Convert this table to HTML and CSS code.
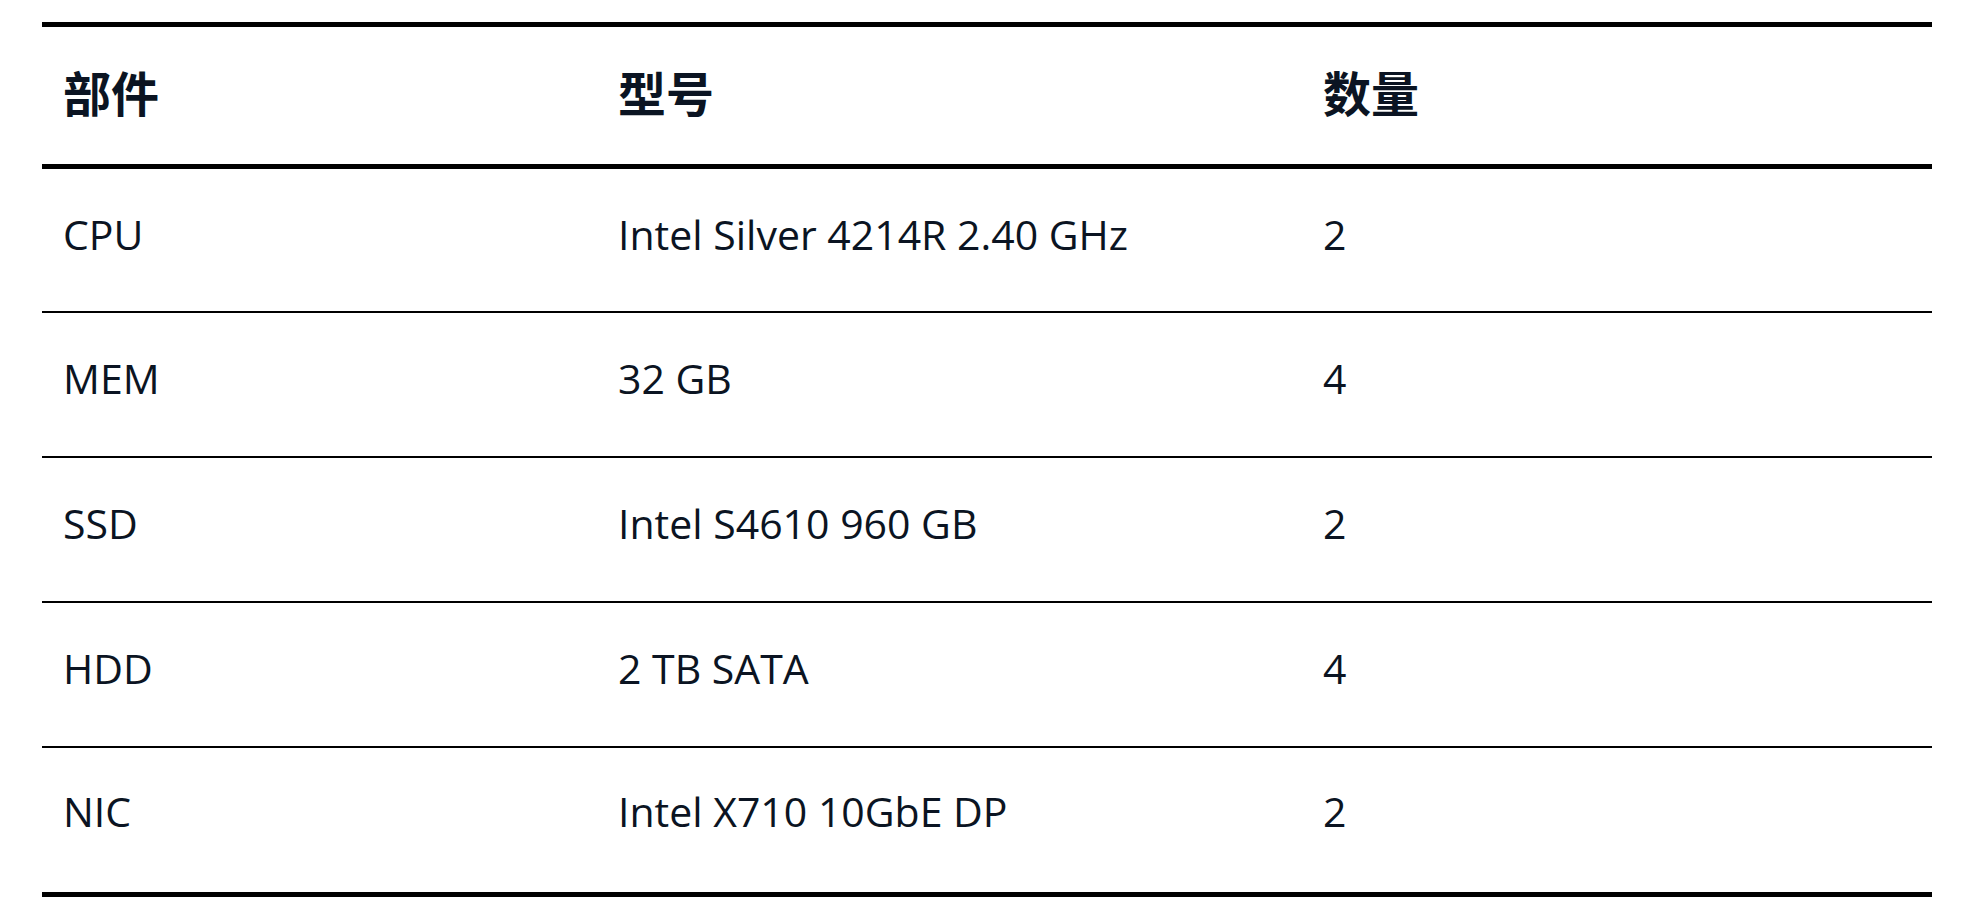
FILE: index.html
```html
<!DOCTYPE html>
<html lang="zh">
<head>
<meta charset="utf-8">
<link rel="stylesheet" href="styles.css">
</head>
<body>
<table class="spec">
  <colgroup>
    <col class="c1"><col class="c2"><col class="c3">
  </colgroup>
  <thead>
    <tr><th>部件</th><th>型号</th><th>数量</th></tr>
  </thead>
  <tbody>
    <tr><td>CPU</td><td>Intel Silver 4214R 2.40 GHz</td><td>2</td></tr>
    <tr><td>MEM</td><td>32 GB</td><td>4</td></tr>
    <tr><td>SSD</td><td>Intel S4610 960 GB</td><td>2</td></tr>
    <tr><td>HDD</td><td>2 TB SATA</td><td>4</td></tr>
    <tr><td>NIC</td><td>Intel X710 10GbE DP</td><td>2</td></tr>
  </tbody>
</table>
</body>
</html>
```
FILE: styles.css
```css
html, body {
  margin: 0;
  padding: 0;
  background: #ffffff;
}
body {
  padding: 22px 54px 0 42px;
  color: #0b1422;
  font-family: "Open Sans", "Noto Sans CJK SC", sans-serif;
}
.spec {
  width: 1890px;
  border-collapse: collapse;
  border-top: 5px solid #000;
  border-bottom: 5px solid #000;
}
.c1 { width: 555px; }
.c2 { width: 705px; }
.c3 { width: 630px; }
.spec th {
  text-align: left;
  font-family: "Noto Sans CJK SC", sans-serif;
  font-weight: 700;
  font-size: 48px;
  line-height: 1;
  height: 142px;
  padding: 0 0 10px 21px;
  box-sizing: border-box;
  border-bottom: 5px solid #000;
  vertical-align: middle;
}
.spec td {
  font-size: 41px;
  height: 145px;
  padding: 0 0 12px 21px;
  box-sizing: border-box;
  vertical-align: middle;
  border-top: 2px solid #000;
}
.spec tbody tr:first-child td {
  border-top: none;
}
.spec tbody tr:last-child td {
  height: 148px;
  padding-bottom: 17px;
}
```
